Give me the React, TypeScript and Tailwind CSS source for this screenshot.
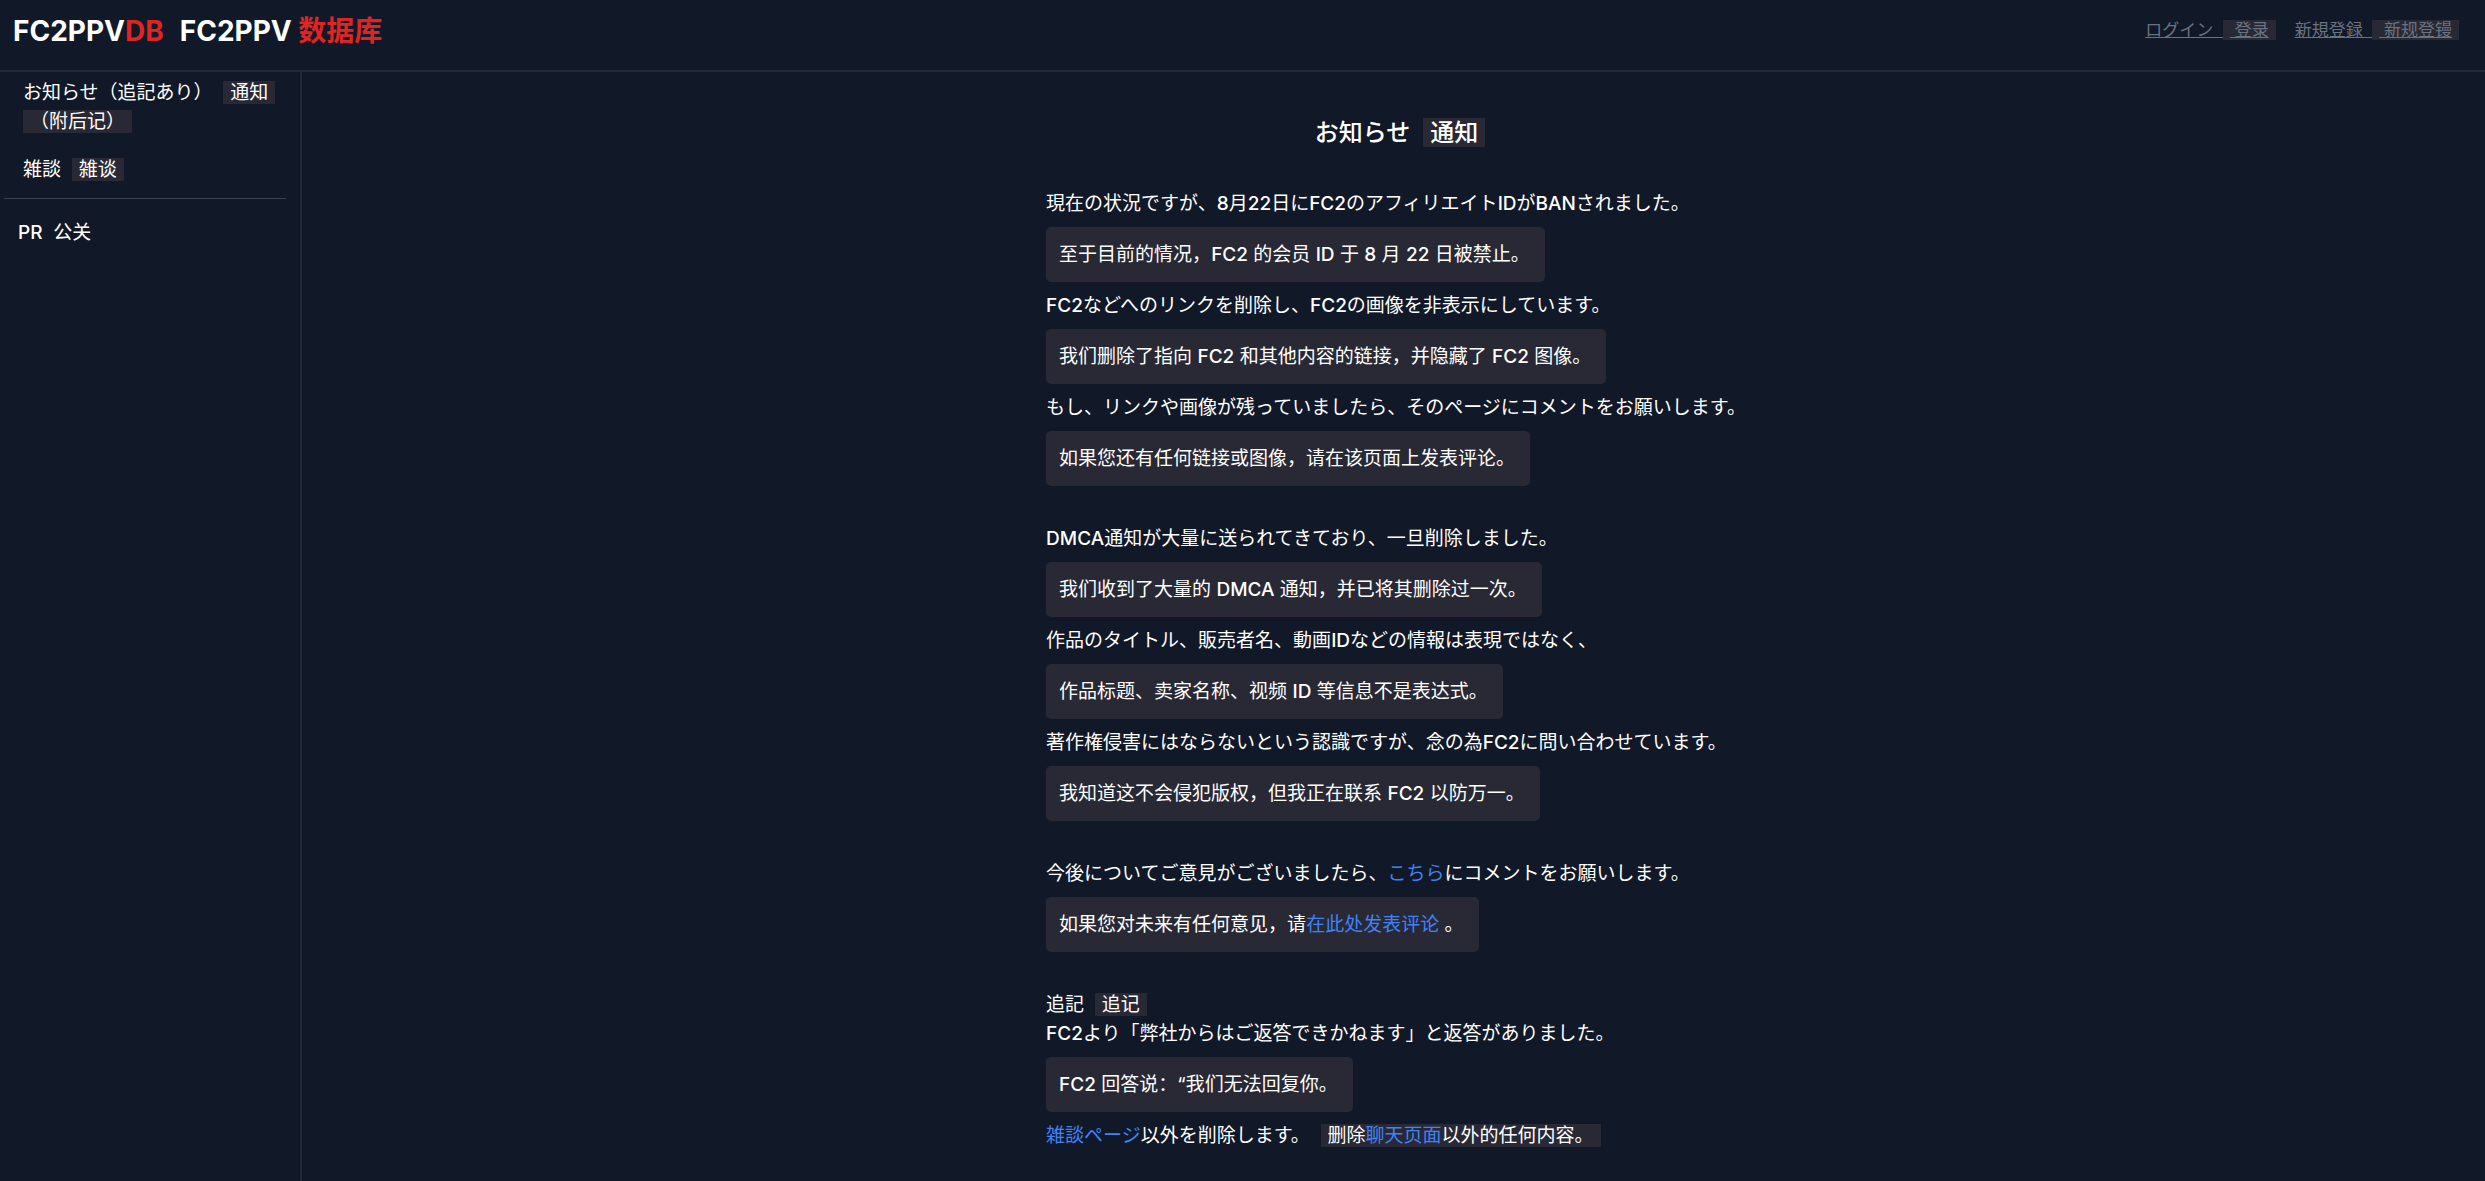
import type { ReactNode } from 'react';

type Line = {
  ja: ReactNode;
  zh: ReactNode;
};

const link = 'text-[#3f83f8] hover:underline';

// Latin runs are set one step heavier than the kana and kanji around them
function Text({ children }: { children: string }) {
  return (
    <>
      {children.split(/([A-Za-z0-9]+)/).map((part, i) =>
        i % 2 ? (
          <span key={i} className="font-medium">
            {part}
          </span>
        ) : (
          part
        ),
      )}
    </>
  );
}

const status: Line[] = [
  {
    ja: <Text>現在の状況ですが、8月22日にFC2のアフィリエイトIDがBANされました。</Text>,
    zh: <Text>至于目前的情况，FC2 的会员 ID 于 8 月 22 日被禁止。</Text>,
  },
  {
    ja: <Text>FC2などへのリンクを削除し、FC2の画像を非表示にしています。</Text>,
    zh: <Text>我们删除了指向 FC2 和其他内容的链接，并隐藏了 FC2 图像。</Text>,
  },
  {
    ja: 'もし、リンクや画像が残っていましたら、そのページにコメントをお願いします。',
    zh: '如果您还有任何链接或图像，请在该页面上发表评论。',
  },
];

const dmca: Line[] = [
  {
    ja: <Text>DMCA通知が大量に送られてきており、一旦削除しました。</Text>,
    zh: <Text>我们收到了大量的 DMCA 通知，并已将其删除过一次。</Text>,
  },
  {
    ja: <Text>作品のタイトル、販売者名、動画IDなどの情報は表現ではなく、</Text>,
    zh: <Text>作品标题、卖家名称、视频 ID 等信息不是表达式。</Text>,
  },
  {
    ja: <Text>著作権侵害にはならないという認識ですが、念の為FC2に問い合わせています。</Text>,
    zh: <Text>我知道这不会侵犯版权，但我正在联系 FC2 以防万一。</Text>,
  },
];

const opinions: Line[] = [
  {
    ja: (
      <>
        今後についてご意見がございましたら、
        <a href="#comments" className={link}>こちら</a>
        にコメントをお願いします。
      </>
    ),
    zh: (
      <>
        如果您对未来有任何意见，请
        <a href="#comments" className={link}>在此处发表评论</a> 。
      </>
    ),
  },
];

const reply: Line[] = [
  {
    ja: <Text>FC2より「弊社からはご返答できかねます」と返答がありました。</Text>,
    zh: <Text>FC2 回答说：“我们无法回复你。</Text>,
  },
];

function Mark({ children }: { children: ReactNode }) {
  return (
    <span
      lang="zh-CN"
      className="bg-[#292936] px-[7px] font-[Inter,'Noto_Sans_CJK_SC',sans-serif]"
    >
      {children}
    </span>
  );
}

function Lines({ items }: { items: Line[] }) {
  return (
    <>
      {items.map((item, i) => (
        <div key={i}>
          <p>{item.ja}</p>
          <p
            lang="zh-CN"
            className="my-[9px] w-fit rounded-[5px] bg-[#292936] py-[13px] pr-[15px] pl-[13px] font-[Inter,'Noto_Sans_CJK_SC',sans-serif]"
          >
            {item.zh}
          </p>
        </div>
      ))}
    </>
  );
}

export default function App() {
  return (
    <div
      lang="ja"
      className="flex min-h-screen flex-col bg-[#111827] text-[19px] leading-[29px] text-white font-[Inter,'Noto_Sans_CJK_JP',sans-serif] [text-spacing-trim:space-all]"
    >
      <header className="flex h-[72px] items-center justify-between border-b-2 border-[#1f2937] pr-[26px] pb-[9px] pl-[13px]">
        <a href="#home" className="flex gap-4 text-[28px] leading-[40px] font-bold">
          <span>
            FC2PPV<span className="text-[#e02424]">DB</span>
          </span>
          <span lang="zh-CN" className="font-[Inter,'Noto_Sans_CJK_SC',sans-serif]">
            FC2PPV <span className="text-[#e02424]">数据库</span>
          </span>
        </a>
        <nav className="flex gap-[19px] text-[17px] text-[#6b7280]">
          <a href="#login" className="underline">
            ログイン&nbsp;&nbsp;<Mark>&nbsp;登录</Mark>
          </a>
          <a href="#register" className="underline">
            新規登録&nbsp;&nbsp;<Mark>&nbsp;新规登镘</Mark>
          </a>
        </nav>
      </header>

      <div className="flex flex-1">
        <aside className="w-[302px] shrink-0 border-r-2 border-[#1f2937] pt-[6px] pr-[14px] pl-1">
          <ul className="space-y-[19px] pl-[19px]">
            <li>
              <a href="#notice">
                お知らせ（追記あり）&nbsp;&nbsp;<Mark>通知</Mark>
                <Mark>（附后记）</Mark>
              </a>
            </li>
            <li>
              <a href="#chat">
                雑談&nbsp;&nbsp;<Mark>雑谈</Mark>
              </a>
            </li>
          </ul>
          <hr className="mt-[14px] border-[#374151]" />
          <p className="mt-[19px] pl-[14px]">
            <span className="font-medium">PR</span>&nbsp;&nbsp;<span lang="zh-CN">公关</span>
          </p>
        </aside>

        <main className="flex-1 pt-[46px]">
          <h1 className="pl-[13px] text-center text-[24px] leading-[29px] font-medium">
            お知らせ&nbsp;&nbsp;<Mark>通知</Mark>
          </h1>
          <div className="mx-auto mt-[42px] w-fit pl-[5px]">
            <Lines items={status} />
            <br />
            <Lines items={dmca} />
            <br />
            <Lines items={opinions} />
            <br />
            <p>
              追記&nbsp;&nbsp;<Mark>追记</Mark>
            </p>
            <Lines items={reply} />
            <p>
              <a href="#chat" className={link}>雑談ページ</a>
              以外を削除します。&nbsp;&nbsp;
              <Mark>
                删除<a href="#chat" className={link}>聊天页面</a>以外的任何内容。
              </Mark>
            </p>
          </div>
        </main>
      </div>
    </div>
  );
}
